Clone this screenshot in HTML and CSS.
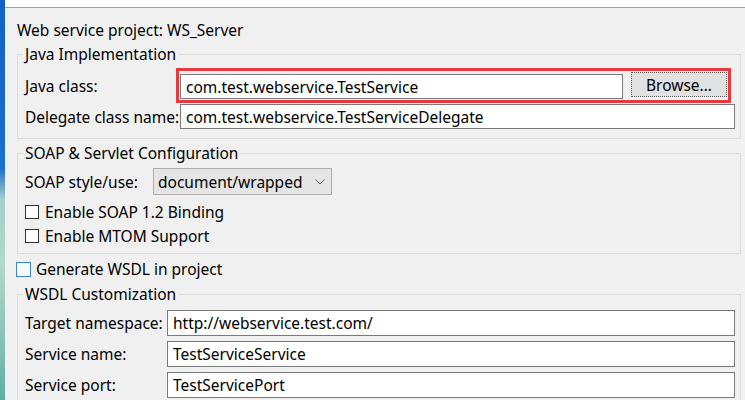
FILE: index.html
```html
<!DOCTYPE html>
<html lang="en">
<head>
    <meta charset="UTF-8">
    <title>New Web Service</title>
    <link rel="stylesheet" href="styles.css">
</head>
<body>
<div class="window">
    <div class="accent"></div>
    <div class="main">
        <div class="topbar"></div>
        <div class="content">
            <div class="project">Web service project: WS_Server</div>

            <fieldset class="group java-group">
                <legend>Java Implementation</legend>
                <div class="form java">
                    <label>Java class:</label>
                    <div class="highlight">
                        <input class="text" type="text" value="com.test.webservice.TestService" readonly>
                        <button class="browse">Browse...</button>
                    </div>
                    <label>Delegate class name:</label>
                    <input class="text" type="text" value="com.test.webservice.TestServiceDelegate" readonly>
                </div>
            </fieldset>

            <fieldset class="group soap-group">
                <legend>SOAP &amp; Servlet Configuration</legend>
                <div class="form soap">
                    <label>SOAP style/use:</label>
                    <div class="select">
                        <span>document/wrapped</span>
                        <svg width="10" height="6" viewBox="0 0 10 6"><path d="M0.5 0.5 L5 5 L9.5 0.5" fill="none" stroke="#606060" stroke-width="1"/></svg>
                    </div>
                </div>
                <label class="check"><input type="checkbox">Enable SOAP 1.2 Binding</label>
                <label class="check"><input type="checkbox">Enable MTOM Support</label>
            </fieldset>

            <label class="check generate"><input type="checkbox">Generate WSDL in project</label>

            <fieldset class="group wsdl-group">
                <legend>WSDL Customization</legend>
                <div class="form wsdl">
                    <label>Target namespace:</label>
                    <input class="text" type="text" value="http://webservice.test.com/" readonly>
                    <label>Service name:</label>
                    <input class="text" type="text" value="TestServiceService" readonly>
                    <label>Service port:</label>
                    <input class="text" type="text" value="TestServicePort" readonly>
                </div>
            </fieldset>
        </div>
    </div>
</div>
</body>
</html>
```

FILE: styles.css
```css
* {
    margin: 0;
    padding: 0;
    box-sizing: border-box;
}

body {
    width: 745px;
    height: 400px;
    overflow: hidden;
    background-color: #f0f0f0;
    font-family: "Noto Sans", "Noto Sans CJK SC", sans-serif;
    font-size: 15.5px;
    color: #000;
}

.window {
    display: flex;
    height: 400px;
}

.accent {
    width: 5px;
    flex: none;
    background: linear-gradient(to bottom, #1062c4 0%, #1d6fcd 42%, #a7d0c8 50%, #b3d8c9 66%, #5fb1a2 100%);
}

.main {
    flex: 1;
    display: flex;
    flex-direction: column;
    overflow: hidden;
}

.topbar {
    flex: none;
    height: 8px;
    background-color: #fff;
    border-bottom: 1px solid #a0a0a0;
}

.content {
    flex: none;
    padding: 12px 4px 0 12px;
}

.project {
    line-height: 20px;
}

.group {
    margin-top: 4px;
    border: 1px solid #dcdcdc;
    padding: 0 5px 7px 7px;
}

.group > legend {
    margin-left: -2px;
    padding: 0 2px;
    line-height: 20px;
}

.java-group {
    padding-bottom: 9px;
}

.soap-group {
    padding-bottom: 5px;
}

.wsdl-group {
    margin-top: 5px;
}

.form {
    display: grid;
    align-items: center;
}

.form label {
    line-height: 20px;
}

.java {
    padding-top: 8px;
    grid-template-columns: 155px 1fr;
    row-gap: 5px;
}

.soap {
    padding-top: 5px;
    grid-template-columns: 128px auto;
    justify-content: start;
    margin-bottom: 5px;
}

.wsdl {
    padding-top: 6px;
    grid-template-columns: 142px 1fr;
    row-gap: 5px;
}

.text {
    height: 25px;
    width: 100%;
    border: 1px solid #7a7a7a;
    background-color: #fff;
    padding: 0 5px;
    font-family: inherit;
    font-size: 15.5px;
    color: #000;
    outline: none;
}

.wsdl .text {
    height: 26px;
}

.highlight {
    display: flex;
    align-items: flex-start;
    gap: 8px;
    height: 27px;
    margin-right: 8px;
    outline: 3px solid #e5393f;
    outline-offset: 1px;
}

.highlight .text {
    margin-top: 2px;
    flex: 1;
}

.browse {
    width: 96px;
    height: 25px;
    flex: none;
    background-color: #e1e1e1;
    border: 1px dotted #5a5a5a;
    font-family: inherit;
    font-size: 15.5px;
    color: #000;
}

.select {
    display: flex;
    align-items: center;
    justify-content: space-between;
    width: 179px;
    height: 27px;
    padding: 0 6px 0 4px;
    background-color: #e5e5e5;
    border: 1px solid #adadad;
}

.check {
    display: flex;
    align-items: center;
    gap: 6px;
    height: 24px;
    line-height: 20px;
}

.check input {
    appearance: none;
    width: 14px;
    height: 14px;
    border: 1px solid #333;
    background-color: #fff;
}

.generate {
    margin: 5px 0 0 -1px;
    height: 20px;
    gap: 5px;
}

.generate input {
    width: 15px;
    height: 15px;
    border-color: #3c86c8;
    background-color: #f4f9fd;
}
```
